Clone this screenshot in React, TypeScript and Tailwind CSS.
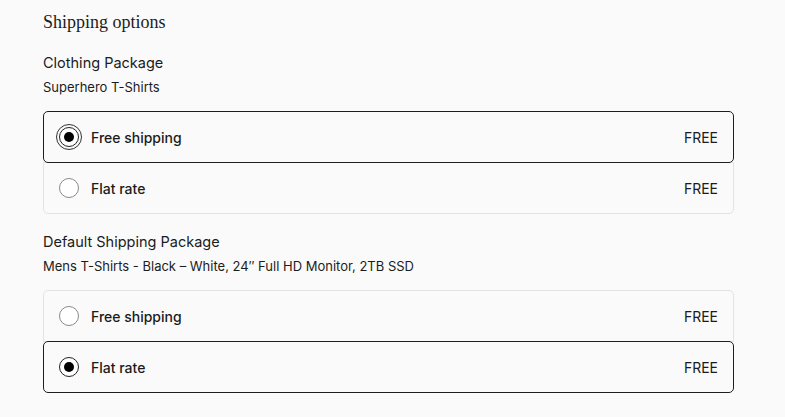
import React from "react";

type Opt = { label: string; price: string; selected: boolean; focus?: boolean };

function Radio({ selected, focus }: { selected: boolean; focus?: boolean }) {
  if (focus) {
    return (
      <span className="flex h-[26px] w-[26px] items-center justify-center rounded-full border border-[#333]">
        <span className="flex h-[20px] w-[20px] items-center justify-center rounded-full border-[1.5px] border-[#222] bg-white">
          <span className="h-[10px] w-[10px] rounded-full bg-black" />
        </span>
      </span>
    );
  }
  return (
    <span className="flex h-[26px] w-[26px] items-center justify-center">
      {selected ? (
        <span className="flex h-[20px] w-[20px] items-center justify-center rounded-full border-[1.5px] border-[#222] bg-white">
          <span className="h-[10px] w-[10px] rounded-full bg-black" />
        </span>
      ) : (
        <span className="h-[20px] w-[20px] rounded-full border border-[#8a8a8a] bg-white" />
      )}
    </span>
  );
}

function Group({ title, subtitle, options }: { title: string; subtitle: string; options: Opt[] }) {
  return (
    <div className="flex flex-col">
      <div className="text-[14.5px] leading-[20px] text-[#1c1c1c]">{title}</div>
      <div className="mt-[4px] text-[13px] leading-[20px] text-[#1c1c1c]">{subtitle}</div>
      <div className="mt-[14px] flex flex-col">
        {options.map((o, i) => {
          const first = i === 0;
          const last = i === options.length - 1;
          const base = "relative flex h-[52px] items-center pl-[12px] pr-[15px] ";
          const pos = (first ? "" : "-mt-px ") + (first ? "rounded-t-[5px] " : "") + (last ? "rounded-b-[5px] " : "");
          const look = o.selected
            ? "z-10 rounded-[5px] border-[1.5px] border-[#1e1e1e]"
            : "border border-[#e3e3e3]";
          return (
            <div key={i} className={base + pos + look}>
              <Radio selected={o.selected} focus={o.focus} />
              <span className="ml-[9px] flex-1 text-[14px] font-medium text-[#1c1c1c]">{o.label}</span>
              <span className="text-[14px] text-[#1c1c1c]">{o.price}</span>
            </div>
          );
        })}
      </div>
    </div>
  );
}

export default function App() {
  return (
    <div
      className="min-h-[417px] w-full bg-[#fafafa] pl-[43px] pt-[9px]"
      style={{ fontFamily: "Inter, 'Noto Sans', sans-serif" }}
    >
      <div className="w-[691px]">
        <h2
          className="text-[18px] leading-[26px] text-[#1c1c1c]"
          style={{ fontFamily: "'Liberation Serif', 'DejaVu Serif', serif" }}
        >
          Shipping options
        </h2>
        <div className="mt-[18px]">
          <Group
            title="Clothing Package"
            subtitle="Superhero T-Shirts"
            options={[
              { label: "Free shipping", price: "FREE", selected: true, focus: true },
              { label: "Flat rate", price: "FREE", selected: false },
            ]}
          />
        </div>
        <div className="mt-[18px]">
          <Group
            title="Default Shipping Package"
            subtitle="Mens T-Shirts - Black – White, 24″ Full HD Monitor, 2TB SSD"
            options={[
              { label: "Free shipping", price: "FREE", selected: false },
              { label: "Flat rate", price: "FREE", selected: true },
            ]}
          />
        </div>
      </div>
    </div>
  );
}
